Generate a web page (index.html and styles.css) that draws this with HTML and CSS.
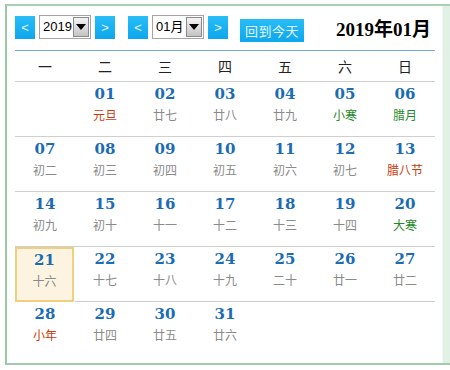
FILE: index.html
```html
<!DOCTYPE html>
<html lang="zh-CN">
<head>
<meta charset="utf-8">
<title>万年历</title>
<link rel="stylesheet" href="styles.css">
</head>
<body>
<div class="frame">
  <div class="cal">
    <div class="head">
      <div class="group">
        <span class="btn nav">&lt;</span>
        <span class="sel sel-year"><span class="val">2019</span><span class="arrow"></span></span>
        <span class="btn nav">&gt;</span>
      </div>
      <div class="group month">
        <span class="btn nav">&lt;</span>
        <span class="sel sel-month"><span class="val">01月</span><span class="arrow"></span></span>
        <span class="btn nav">&gt;</span>
      </div>
      <span class="btn today">回到今天</span>
      <span class="title">2019年01月</span>
    </div>
    <div class="grid">
      <div class="wk">一</div><div class="wk">二</div><div class="wk">三</div><div class="wk">四</div><div class="wk">五</div><div class="wk">六</div><div class="wk">日</div>

      <div class="day"></div>
      <div class="day"><b>01</b><i class="red">元旦</i></div>
      <div class="day"><b>02</b><i>廿七</i></div>
      <div class="day"><b>03</b><i>廿八</i></div>
      <div class="day"><b>04</b><i>廿九</i></div>
      <div class="day"><b>05</b><i class="green">小寒</i></div>
      <div class="day"><b>06</b><i class="green">腊月</i></div>

      <div class="day"><b>07</b><i>初二</i></div>
      <div class="day"><b>08</b><i>初三</i></div>
      <div class="day"><b>09</b><i>初四</i></div>
      <div class="day"><b>10</b><i>初五</i></div>
      <div class="day"><b>11</b><i>初六</i></div>
      <div class="day"><b>12</b><i>初七</i></div>
      <div class="day"><b>13</b><i class="red">腊八节</i></div>

      <div class="day"><b>14</b><i>初九</i></div>
      <div class="day"><b>15</b><i>初十</i></div>
      <div class="day"><b>16</b><i>十一</i></div>
      <div class="day"><b>17</b><i>十二</i></div>
      <div class="day"><b>18</b><i>十三</i></div>
      <div class="day"><b>19</b><i>十四</i></div>
      <div class="day"><b>20</b><i class="green">大寒</i></div>

      <div class="day today-cell"><b>21</b><i>十六</i></div>
      <div class="day"><b>22</b><i>十七</i></div>
      <div class="day"><b>23</b><i>十八</i></div>
      <div class="day"><b>24</b><i>十九</i></div>
      <div class="day"><b>25</b><i>二十</i></div>
      <div class="day"><b>26</b><i>廿一</i></div>
      <div class="day"><b>27</b><i>廿二</i></div>

      <div class="day last"><b>28</b><i class="red">小年</i></div>
      <div class="day last"><b>29</b><i>廿四</i></div>
      <div class="day last"><b>30</b><i>廿五</i></div>
      <div class="day last"><b>31</b><i>廿六</i></div>
    </div>
  </div>
  <div class="strip"></div>
</div>
</body>
</html>
```

FILE: styles.css
```css
html, body {
  margin: 0;
  padding: 0;
  background: #fff;
}
body {
  font-family: "Liberation Sans", "Noto Sans CJK SC", sans-serif;
}
.frame {
  margin: 4px 0 0 5px;
  height: 357px;
  border-top: 2px solid #a9d1b1;
  border-left: 2px solid #9dc6a5;
  border-bottom: 2px solid #a3cbab;
  display: flex;
}
.cal {
  width: 435px;
  background: #fff;
}
.strip {
  flex: 1;
  background: #e2f1e6;
  border-left: 1px solid #eef7f0;
}
.head {
  display: flex;
  align-items: center;
  height: 24px;
  margin: 9px 0 0 8px;
}
.group {
  display: flex;
  align-items: center;
  gap: 4px;
}
.group.month {
  margin-left: 13px;
}
.btn {
  display: inline-flex;
  align-items: center;
  justify-content: center;
  color: #e6f7ff;
  background: linear-gradient(#28bdf7, #0ea6ee);
  font-size: 13px;
}
.nav {
  width: 20px;
  height: 23px;
}
.sel {
  display: inline-flex;
  align-items: stretch;
  width: 52px;
  height: 24px;
  border: 1px solid #a4a4a4;
  box-sizing: border-box;
  background: #fff;
  margin-top: -1px;
}
.sel .val {
  flex: 1;
  font-size: 13px;
  color: #000;
  line-height: 22px;
  padding-left: 3px;
}
.sel .arrow {
  width: 16px;
  margin: 1px;
  background: linear-gradient(#f4f4f4, #c4c4c4);
  border: 1px solid #8a8a8a;
  box-sizing: border-box;
  position: relative;
}
.sel .arrow::after {
  content: "";
  position: absolute;
  left: 2px;
  top: 6px;
  border-left: 5px solid transparent;
  border-right: 5px solid transparent;
  border-top: 6px solid #000;
}
.today {
  width: 64px;
  height: 23px;
  margin: 6px 0 0 12px;
  font-size: 13px;
  letter-spacing: 0.5px;
}
.title {
  margin-left: 32px;
  font-family: "Liberation Serif", "Noto Sans CJK SC", serif;
  font-weight: bold;
  font-size: 19px;
  color: #000;
  margin-top: 1px;
}
.grid {
  margin: 11px 0 0 8px;
  width: 420px;
  border-top: 1px solid #76abd9;
  display: grid;
  grid-template-columns: repeat(7, 60px);
}
.wk {
  height: 30px;
  line-height: 30px;
  text-align: center;
  font-family: "Noto Sans CJK SC", sans-serif;
  font-size: 14px;
  color: #222;
  border-bottom: 1px solid #cfcfcf;
}
.day {
  height: 52px;
  border-bottom: 1px solid #cfcfcf;
  display: flex;
  flex-direction: column;
  align-items: center;
  padding-top: 2px;
  box-sizing: content-box;
}
.day.last {
  border-bottom: none;
}
.day b {
  font-family: "DejaVu Serif", serif;
  font-weight: bold;
  font-size: 15px;
  line-height: 20px;
  color: #1b6cb4;
  height: 20px;
}
.day i {
  font-style: normal;
  font-family: "Noto Sans CJK SC", sans-serif;
  font-size: 12px;
  line-height: 18px;
  margin-top: 2px;
  color: #8a8a8a;
}
.day i.red { color: #cc3a0c; }
.day i.green { color: #1f8a2a; }
.today-cell {
  width: 59px;
  height: 55px;
  padding-top: 1px;
  box-sizing: border-box;
  border: 2px solid #efcf80;
  background: #fcf4e0;
}
```
